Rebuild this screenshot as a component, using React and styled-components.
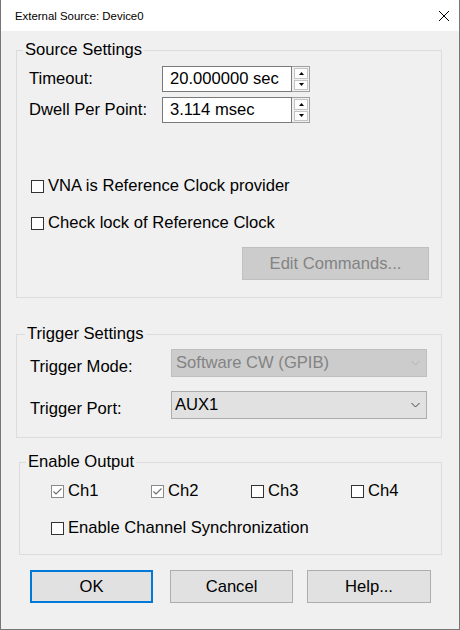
import React from "react";
import styled, { createGlobalStyle } from "styled-components";

const GlobalStyle = createGlobalStyle`
  html, body {
    margin: 0;
    padding: 0;
    background: #ffffff;
  }
  body {
    font-family: "Liberation Sans", Arial, sans-serif;
    color: #000;
  }
  * {
    box-sizing: border-box;
  }
`;

const FONT = "16.6px";

const Window = styled.div`
  width: 460px;
  height: 630px;
  display: flex;
  flex-direction: column;
  background: #f0f0f0;
  border: 1px solid #767676;
  border-top: none;
`;

const TitleBar = styled.div`
  height: 31px;
  flex-shrink: 0;
  display: flex;
  align-items: center;
  justify-content: space-between;
  padding: 0 9px 0 14px;
  background: #ffffff;
  font-size: 11.4px;
`;

const CloseButton = styled.div`
  width: 12px;
  height: 12px;
  display: flex;
`;

const Body = styled.div`
  display: flex;
  flex-direction: column;
  padding: 10px 0 0 15px;
`;

const Group = styled.fieldset`
  margin: ${(p) => p.$mt || 0}px 0 0 ${(p) => p.$ml || 0}px;
  width: ${(p) => p.$w}px;
  min-width: 0;
  border: 1px solid #dcdcdc;
  padding: ${(p) => p.$pad};
  display: flex;
  flex-direction: column;
`;

const Legend = styled.legend`
  font-size: ${FONT};
  line-height: 18px;
  padding: 0 2px;
  margin-left: ${(p) => p.$ml}px;
`;

const Row = styled.div`
  display: flex;
  align-items: center;
  height: ${(p) => p.$h || 26}px;
  margin-top: ${(p) => p.$mt || 0}px;
`;

const Label = styled.div`
  width: ${(p) => p.$w}px;
  font-size: ${FONT};
  padding-top: ${(p) => p.$drop || 0}px;
  flex-shrink: 0;
`;

const SpinField = styled.div`
  display: flex;
  height: 26px;
`;

const TextBox = styled.div`
  width: 130px;
  height: 26px;
  display: flex;
  align-items: center;
  padding-left: 7px;
  background: #ffffff;
  border: 1px solid #7a7a7a;
  font-size: ${FONT};
`;

const Spinner = styled.div`
  width: 18px;
  height: 26px;
  display: flex;
  flex-direction: column;
  padding: 1px 1px 1px 2px;
  gap: 1px;
  border: 1px solid #a0a0a0;
  border-left: none;
  background: #f0f0f0;
`;

const SpinButton = styled.div`
  flex: 1;
  display: flex;
  align-items: center;
  justify-content: center;
  background: #fdfdfd;
  border: 1px solid #c4c4c4;
`;

const CheckRow = styled.label`
  display: flex;
  align-items: center;
  gap: 4px;
  height: 20px;
  flex-shrink: 0;
  width: ${(p) => (p.$w ? `${p.$w}px` : "auto")};
  margin-top: ${(p) => p.$mt || 0}px;
  padding-left: ${(p) => p.$pl || 0}px;
  font-size: ${FONT};
`;

const Box = styled.span`
  width: 13px;
  height: 13px;
  flex-shrink: 0;
  display: flex;
  align-items: center;
  justify-content: center;
  background: #ffffff;
  border: 1px solid ${(p) => (p.$checked ? "#8a8a8a" : "#333333")};
`;

const ChannelRow = styled.div`
  display: flex;
  padding-left: 31px;
`;

const EditButton = styled.div`
  align-self: flex-end;
  width: 187px;
  height: 33px;
  margin-top: 14px;
  display: flex;
  align-items: center;
  justify-content: center;
  background: #cccccc;
  border: 1px solid #bfbfbf;
  color: #838383;
  font-size: ${FONT};
`;

const Combo = styled.div`
  width: 256px;
  height: 28px;
  display: flex;
  align-items: center;
  justify-content: space-between;
  padding: 0 6px 0 ${(p) => (p.$disabled ? 4 : 3)}px;
  background: ${(p) => (p.$disabled ? "#cccccc" : "#e1e1e1")};
  border: 1px solid ${(p) => (p.$disabled ? "#bfbfbf" : "#adadad")};
  color: ${(p) => (p.$disabled ? "#838383" : "#000000")};
  font-size: ${FONT};
`;

const ButtonRow = styled.div`
  display: flex;
  padding-left: 29px;
  margin-top: 15px;
`;

const DialogButton = styled.div`
  width: ${(p) => p.$w || 123}px;
  height: 33px;
  margin-left: ${(p) => p.$ml || 0}px;
  display: flex;
  align-items: center;
  justify-content: center;
  background: #e1e1e1;
  border: ${(p) => (p.$default ? "2px solid #0078d7" : "1px solid #adadad")};
  font-size: ${FONT};
`;

const Check = ({ checked }) => (
  <Box $checked={checked}>
    {checked && (
      <svg width="9" height="9" viewBox="0 0 9 9">
        <polyline
          points="0.5,4.5 3,7 8.5,1.5"
          fill="none"
          stroke="#6d6d6d"
          strokeWidth="1.1"
        />
      </svg>
    )}
  </Box>
);

const Chevron = ({ color }) => (
  <svg width="9" height="6" viewBox="0 0 9 6">
    <polyline points="0.5,1 4.5,5 8.5,1" fill="none" stroke={color} strokeWidth="1" />
  </svg>
);

const Triangle = ({ up }) => (
  <svg width="5" height="3" viewBox="0 0 5 3">
    <polygon points={up ? "2.5,0 5,3 0,3" : "0,0 5,0 2.5,3"} fill="#000" />
  </svg>
);

const SpinInput = ({ value }) => (
  <SpinField>
    <TextBox>{value}</TextBox>
    <Spinner>
      <SpinButton>
        <Triangle up />
      </SpinButton>
      <SpinButton>
        <Triangle />
      </SpinButton>
    </Spinner>
  </SpinField>
);

export default function App() {
  return (
    <>
      <GlobalStyle />
      <Window>
        <TitleBar>
          <span>External Source: Device0</span>
          <CloseButton>
            <svg width="12" height="12" viewBox="0 0 12 12">
              <path d="M1 1 L11 11 M11 1 L1 11" stroke="#000" strokeWidth="1" />
            </svg>
          </CloseButton>
        </TitleBar>
        <Body>
          <Group $w={426} $pad="7px 12px 17px 12px">
            <Legend $ml={-6}>Source Settings</Legend>
            <Row>
              <Label $w={133}>Timeout:</Label>
              <SpinInput value="20.000000 sec" />
            </Row>
            <Row $mt={5}>
              <Label $w={133}>Dwell Per Point:</Label>
              <SpinInput value="3.114 msec" />
            </Row>
            <CheckRow $mt={53} $pl={2}>
              <Check />
              VNA is Reference Clock provider
            </CheckRow>
            <CheckRow $mt={17} $pl={2}>
              <Check />
              Check lock of Reference Clock
            </CheckRow>
            <EditButton>Edit Commands...</EditButton>
          </Group>

          <Group $w={426} $mt={27} $pad="6px 12px 18px 13px">
            <Legend $ml={-5}>Trigger Settings</Legend>
            <Row $h={28}>
              <Label $w={141} $drop={8}>Trigger Mode:</Label>
              <Combo $disabled>
                Software CW (GPIB)
                <Chevron color="#b4b4b4" />
              </Combo>
            </Row>
            <Row $h={28} $mt={14}>
              <Label $w={141} $drop={8}>Trigger Port:</Label>
              <Combo>
                AUX1
                <Chevron color="#404040" />
              </Combo>
            </Row>
          </Group>

          <Group $w={423} $ml={3} $mt={15} $pad="10px 12px 16px 0">
            <Legend $ml={6}>Enable Output</Legend>
            <ChannelRow>
              {["Ch1", "Ch2", "Ch3", "Ch4"].map((ch, i) => (
                <CheckRow key={ch} $w={100}>
                  <Check checked={i < 2} />
                  {ch}
                </CheckRow>
              ))}
            </ChannelRow>
            <CheckRow $mt={17} $pl={31}>
              <Check />
              Enable Channel Synchronization
            </CheckRow>
          </Group>
        </Body>
        <ButtonRow>
          <DialogButton $default>OK</DialogButton>
          <DialogButton $ml={17}>Cancel</DialogButton>
          <DialogButton $ml={14} $w={124}>
            Help...
          </DialogButton>
        </ButtonRow>
      </Window>
    </>
  );
}
